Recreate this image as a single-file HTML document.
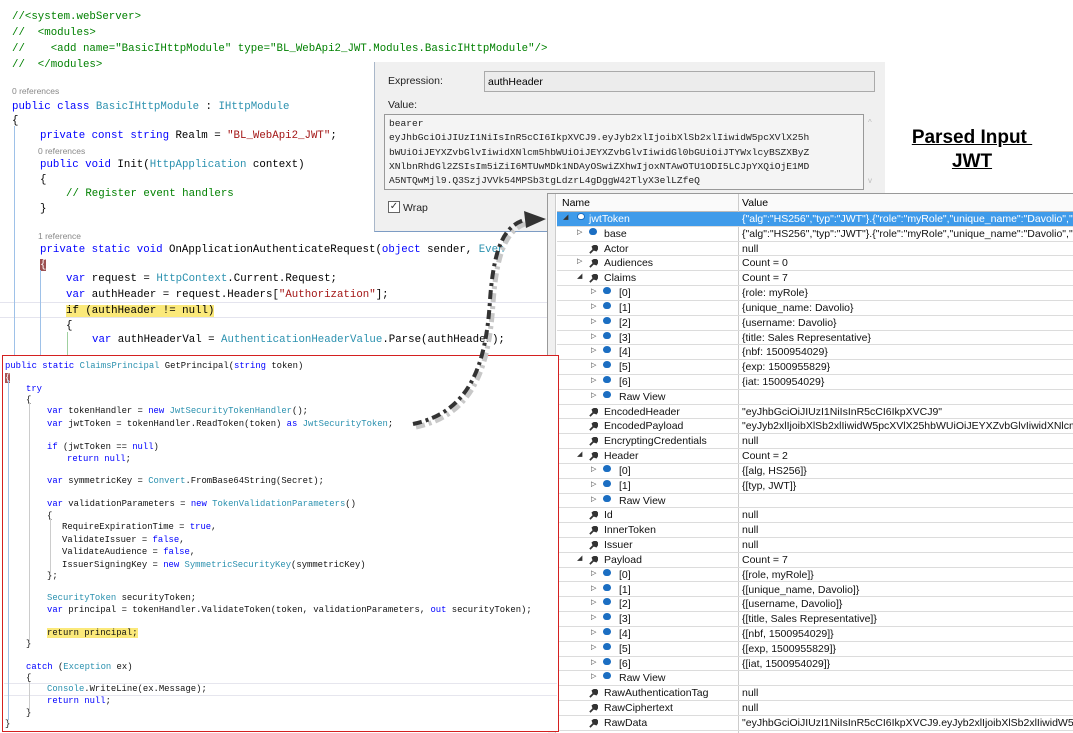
<!DOCTYPE html>
<html><head><meta charset="utf-8"><style>
*{margin:0;padding:0;box-sizing:border-box}
body{width:1073px;height:732px;background:#fff;position:relative;overflow:hidden;font-family:"Liberation Sans",sans-serif}
.c{position:absolute;font-family:"Liberation Mono",monospace;font-size:10.75px;white-space:pre;color:#000;line-height:14px}
.s{position:absolute;font-family:"Liberation Sans",sans-serif;font-size:8.5px;color:#888;white-space:pre}
.k{color:#0000ff}.t{color:#2b91af}.g{color:#008000}.r{color:#a31515}
.b{position:absolute;font-family:"Liberation Mono",monospace;font-size:8.9px;white-space:pre;color:#111;line-height:11px}
#box{position:absolute;left:2px;top:355px;width:557px;height:377px;border:1.5px solid #d42020;background:#fff}
#dlg{position:absolute;left:374px;top:62px;width:511px;height:170px;background:#f0f0f0;border-left:1px solid #a9b7c9;border-bottom:1px solid #7d9cc4}
#dlg .l{position:absolute;font-size:10.5px;color:#222}
#w{position:absolute;left:547px;top:193px;width:526px;height:539px;background:#fff;border-left:1px solid #999;border-top:1px solid #999}
.row{position:absolute;left:9px;width:520px;height:14.82px;border-bottom:1px solid #dcdcdc;font-size:10.5px;color:#111}
.row span{position:absolute;top:1px;white-space:nowrap}
.row .v{left:185px}
.sel{background:#3f9bea;color:#fff}
.tri{position:absolute;font-size:7px;top:3px;color:#333}
.ic{position:absolute;top:4px;width:8px;height:7px;border-radius:50% 50% 45% 45%;background:#1b6ec2}
.wr{position:absolute;top:3px;width:9px;height:9px}
</style></head><body>

<div class="c g" style="left:12px;top:10px">//&lt;system.webServer&gt;</div>
<div class="c g" style="left:12px;top:26px">//  &lt;modules&gt;</div>
<div class="c g" style="left:12px;top:42px">//    &lt;add name="BasicIHttpModule" type="BL_WebApi2_JWT.Modules.BasicIHttpModule"/&gt;</div>
<div class="c g" style="left:12px;top:58px">//  &lt;/modules&gt;</div>
<div class="s" style="left:12px;top:86px">0 references</div>
<div class="c" style="left:12px;top:100px"><span class="k">public class</span> <span class="t">BasicIHttpModule</span> : <span class="t">IHttpModule</span></div>
<div class="c" style="left:12px;top:114px">{</div>
<div class="c" style="left:40px;top:129px"><span class="k">private const string</span> Realm = <span class="r">"BL_WebApi2_JWT"</span>;</div>
<div class="s" style="left:38px;top:146px">0 references</div>
<div class="c" style="left:40px;top:158px"><span class="k">public void</span> Init(<span class="t">HttpApplication</span> context)</div>
<div class="c" style="left:40px;top:173px">{</div>
<div class="c g" style="left:66px;top:187px">// Register event handlers</div>
<div class="c" style="left:40px;top:202px">}</div>
<div class="s" style="left:38px;top:231px">1 reference</div>
<div class="c" style="left:40px;top:243px"><span class="k">private static void</span> OnApplicationAuthenticateRequest(<span class="k">object</span> sender, <span class="t">Even</span></div>
<div class="c" style="left:40px;top:258px"><span style="background:#9c5050;color:#fff">{</span></div>
<div class="c" style="left:66px;top:272px"><span class="k">var</span> request = <span class="t">HttpContext</span>.Current.Request;</div>
<div class="c" style="left:66px;top:288px"><span class="k">var</span> authHeader = request.Headers[<span class="r">"Authorization"</span>];</div>
<div style="position:absolute;left:0;top:302px;width:548px;height:16px;border-top:1px solid #e4e4ee;border-bottom:1px solid #e4e4ee"></div>
<div class="c" style="left:66px;top:304px"><span style="background:#fbe97a">if (authHeader != null)</span></div>
<div class="c" style="left:66px;top:319px">{</div>
<div class="c" style="left:92px;top:333px"><span class="k">var</span> authHeaderVal = <span class="t">AuthenticationHeaderValue</span>.Parse(authHeader);</div>
<div style="position:absolute;left:14px;top:126px;width:1px;height:230px;background:#9ec1e8"></div>
<div style="position:absolute;left:40px;top:270px;width:1px;height:86px;background:#9ec1e8"></div>
<div style="position:absolute;left:67px;top:332px;width:1px;height:24px;background:#9fd09f"></div>

<div id="dlg">
<div class="l" style="left:13px;top:13px">Expression:</div>
<div style="position:absolute;left:109px;top:9px;width:391px;height:21px;border:1px solid #aaa;background:#ececec;font-size:10.5px;padding:4px 3px">authHeader</div>
<div class="l" style="left:13px;top:37px">Value:</div>
<div style="position:absolute;left:9px;top:52px;width:480px;height:76px;border:1px solid #999;background:#f4f4f4;font-family:'Liberation Mono',monospace;font-size:9.6px;line-height:14.3px;padding:2px 4px;white-space:pre;color:#222">bearer
eyJhbGciOiJIUzI1NiIsInR5cCI6IkpXVCJ9.eyJyb2xlIjoibXlSb2xlIiwidW5pcXVlX25h
bWUiOiJEYXZvbGlvIiwidXNlcm5hbWUiOiJEYXZvbGlvIiwidGl0bGUiOiJTYWxlcyBSZXByZ
XNlbnRhdGl2ZSIsIm5iZiI6MTUwMDk1NDAyOSwiZXhwIjoxNTAwOTU1ODI5LCJpYXQiOjE1MD
A5NTQwMjl9.Q3SzjJVVk54MPSb3tgLdzrL4gDggW42TlyX3elLZfeQ</div>
<div style="position:absolute;left:493px;top:56px;font-size:8px;color:#bbb">^</div>
<div style="position:absolute;left:493px;top:114px;font-size:8px;color:#bbb">v</div>
<div style="position:absolute;left:13px;top:139px;width:12px;height:12px;border:1px solid #666;background:#fff;font-size:10px;line-height:10px;text-align:center;color:#333">✓</div>
<div class="l" style="left:28px;top:140px">Wrap</div>
</div>

<div style="position:absolute;left:907px;top:126px;font-family:'Liberation Sans Narrow','Liberation Sans',sans-serif;font-weight:bold;font-size:19px;text-decoration:underline;color:#000;line-height:24px;text-align:center;width:130px">Parsed Input&nbsp;<br>JWT</div>

<div id="w">
<div style="position:absolute;left:0;top:0;width:8px;height:539px;background:#f0f0f0;border-right:1px solid #ccc"></div>
<div style="position:absolute;left:9px;top:0;width:520px;height:18px;background:#fafafa;border-bottom:1px solid #bbb;font-size:10.5px">
<span style="position:absolute;left:5px;top:3px">Name</span><span style="position:absolute;left:185px;top:3px">Value</span></div>
<div style="position:absolute;left:190px;top:0;width:1px;height:539px;background:#ccc"></div>
<div id="rows"></div>
</div>

<div id="box"></div>
<div class="b" style="left:5px;top:361px"><span class="k">public static</span> <span class="t">ClaimsPrincipal</span> GetPrincipal(<span class="k">string</span> token)</div>
<div class="b" style="left:5px;top:373px"><span style="background:#a55;color:#fff">{</span></div>
<div class="b" style="left:26px;top:384px"><span class="k">try</span></div>
<div class="b" style="left:26px;top:395px">{</div>
<div class="b" style="left:47px;top:406px"><span class="k">var</span> tokenHandler = <span class="k">new</span> <span class="t">JwtSecurityTokenHandler</span>();</div>
<div class="b" style="left:47px;top:419px"><span class="k">var</span> jwtToken = tokenHandler.ReadToken(token) <span class="k">as</span> <span class="t">JwtSecurityToken</span>;</div>
<div class="b" style="left:47px;top:442px"><span class="k">if</span> (jwtToken == <span class="k">null</span>)</div>
<div class="b" style="left:67px;top:454px"><span class="k">return null</span>;</div>
<div class="b" style="left:47px;top:476px"><span class="k">var</span> symmetricKey = <span class="t">Convert</span>.FromBase64String(Secret);</div>
<div class="b" style="left:47px;top:499px"><span class="k">var</span> validationParameters = <span class="k">new</span> <span class="t">TokenValidationParameters</span>()</div>
<div class="b" style="left:47px;top:511px">{</div>
<div class="b" style="left:62px;top:522px">RequireExpirationTime = <span class="k">true</span>,</div>
<div class="b" style="left:62px;top:535px">ValidateIssuer = <span class="k">false</span>,</div>
<div class="b" style="left:62px;top:547px">ValidateAudience = <span class="k">false</span>,</div>
<div class="b" style="left:62px;top:560px">IssuerSigningKey = <span class="k">new</span> <span class="t">SymmetricSecurityKey</span>(symmetricKey)</div>
<div class="b" style="left:47px;top:571px">};</div>
<div class="b" style="left:47px;top:593px"><span class="t">SecurityToken</span> securityToken;</div>
<div class="b" style="left:47px;top:605px"><span class="k">var</span> principal = tokenHandler.ValidateToken(token, validationParameters, <span class="k">out</span> securityToken);</div>
<div class="b" style="left:47px;top:628px"><span style="background:#fbe97a">return principal;</span></div>
<div class="b" style="left:26px;top:639px">}</div>
<div class="b" style="left:26px;top:662px"><span class="k">catch</span> (<span class="t">Exception</span> ex)</div>
<div class="b" style="left:26px;top:673px">{</div>
<div style="position:absolute;left:4px;top:683px;width:553px;height:13px;border-top:1px solid #e6e6ee;border-bottom:1px solid #e6e6ee"></div>
<div class="b" style="left:47px;top:684px"><span class="t">Console</span>.WriteLine(ex.Message);</div>
<div class="b" style="left:47px;top:696px"><span class="k">return null</span>;</div>
<div class="b" style="left:26px;top:708px">}</div>
<div class="b" style="left:5px;top:719px">}</div>
<div style="position:absolute;left:8px;top:380px;width:1px;height:340px;background:#9ec1e8"></div>
<div style="position:absolute;left:29px;top:402px;width:1px;height:240px;background:#ccc"></div>
<div style="position:absolute;left:50px;top:518px;width:1px;height:55px;background:#ccc"></div>
<div style="position:absolute;left:29px;top:682px;width:1px;height:30px;background:#ccc"></div>

<svg style="position:absolute;left:0;top:0" width="1073" height="732">
<path d="M413,424 C470,412 486,365 490,300 C494,245 505,224 528,219" fill="none" stroke="#c8c8c8" stroke-width="5" stroke-dasharray="9 4 3 4" transform="translate(3,3)"/>
<path d="M413,424 C470,412 486,365 490,300 C494,245 505,224 528,219" fill="none" stroke="#333" stroke-width="4" stroke-dasharray="9 4 3 4"/>
<path d="M524,211 L546,219 L526,228 Z" fill="#333"/>
</svg>

<script>
var R=[[0,'o','i','jwtToken','{"alg":"HS256","typ":"JWT"}.{"role":"myRole","unique_name":"Davolio","'],
[1,'c','i','base','{"alg":"HS256","typ":"JWT"}.{"role":"myRole","unique_name":"Davolio","'],
[1,'','w','Actor','null'],[1,'c','w','Audiences','Count = 0'],[1,'o','w','Claims','Count = 7'],
[2,'c','i','[0]','{role: myRole}'],[2,'c','i','[1]','{unique_name: Davolio}'],[2,'c','i','[2]','{username: Davolio}'],
[2,'c','i','[3]','{title: Sales Representative}'],[2,'c','i','[4]','{nbf: 1500954029}'],[2,'c','i','[5]','{exp: 1500955829}'],
[2,'c','i','[6]','{iat: 1500954029}'],[2,'c','i','Raw View',''],
[1,'','w','EncodedHeader','"eyJhbGciOiJIUzI1NiIsInR5cCI6IkpXVCJ9"'],
[1,'','w','EncodedPayload','"eyJyb2xlIjoibXlSb2xlIiwidW5pcXVlX25hbWUiOiJEYXZvbGlvIiwidXNlcm5h'],
[1,'','w','EncryptingCredentials','null'],[1,'o','w','Header','Count = 2'],
[2,'c','i','[0]','{[alg, HS256]}'],[2,'c','i','[1]','{[typ, JWT]}'],[2,'c','i','Raw View',''],
[1,'','w','Id','null'],[1,'','w','InnerToken','null'],[1,'','w','Issuer','null'],[1,'o','w','Payload','Count = 7'],
[2,'c','i','[0]','{[role, myRole]}'],[2,'c','i','[1]','{[unique_name, Davolio]}'],[2,'c','i','[2]','{[username, Davolio]}'],
[2,'c','i','[3]','{[title, Sales Representative]}'],[2,'c','i','[4]','{[nbf, 1500954029]}'],[2,'c','i','[5]','{[exp, 1500955829]}'],
[2,'c','i','[6]','{[iat, 1500954029]}'],[2,'c','i','Raw View',''],
[1,'','w','RawAuthenticationTag','null'],[1,'','w','RawCiphertext','null'],
[1,'','w','RawData','"eyJhbGciOiJIUzI1NiIsInR5cCI6IkpXVCJ9.eyJyb2xlIjoibXlSb2xlIiwidW5pcXV']];
var h='';
var wr='<svg class="wr" viewBox="0 0 10 10"><path d="M1,9 L5,5 M4,2 L7,0 L10,3 L8,6 L5,5 L4,2 Z" stroke="#333" stroke-width="2" fill="#333"/></svg>';
R.forEach(function(r,i){
var L=r[0],top=18+i*14.82;
var s='<div class="row'+(i==0?' sel':'')+'" style="top:'+top+'px">';
if(r[1])s+='<span class="tri" style="left:'+(6+14*L)+'px">'+(r[1]=='o'?'◢':'▷')+'</span>';
var ix=20+12*L+(L==2?2:0);
if(r[2]=='i')s+='<span class="ic" style="left:'+ix+'px;'+(i==0?'background:#fff;border:1px solid #1b6ec2':'')+'"></span>';
else s+=wr.replace('class="wr"','class="wr" style="left:'+ix+'px"');
s+='<span style="left:'+(32+15*L)+'px">'+r[3]+'</span><span class="v">'+r[4].replace(/</g,'&lt;')+'</span></div>';
h+=s;});
document.getElementById('rows').innerHTML=h;
</script>
</body></html>
